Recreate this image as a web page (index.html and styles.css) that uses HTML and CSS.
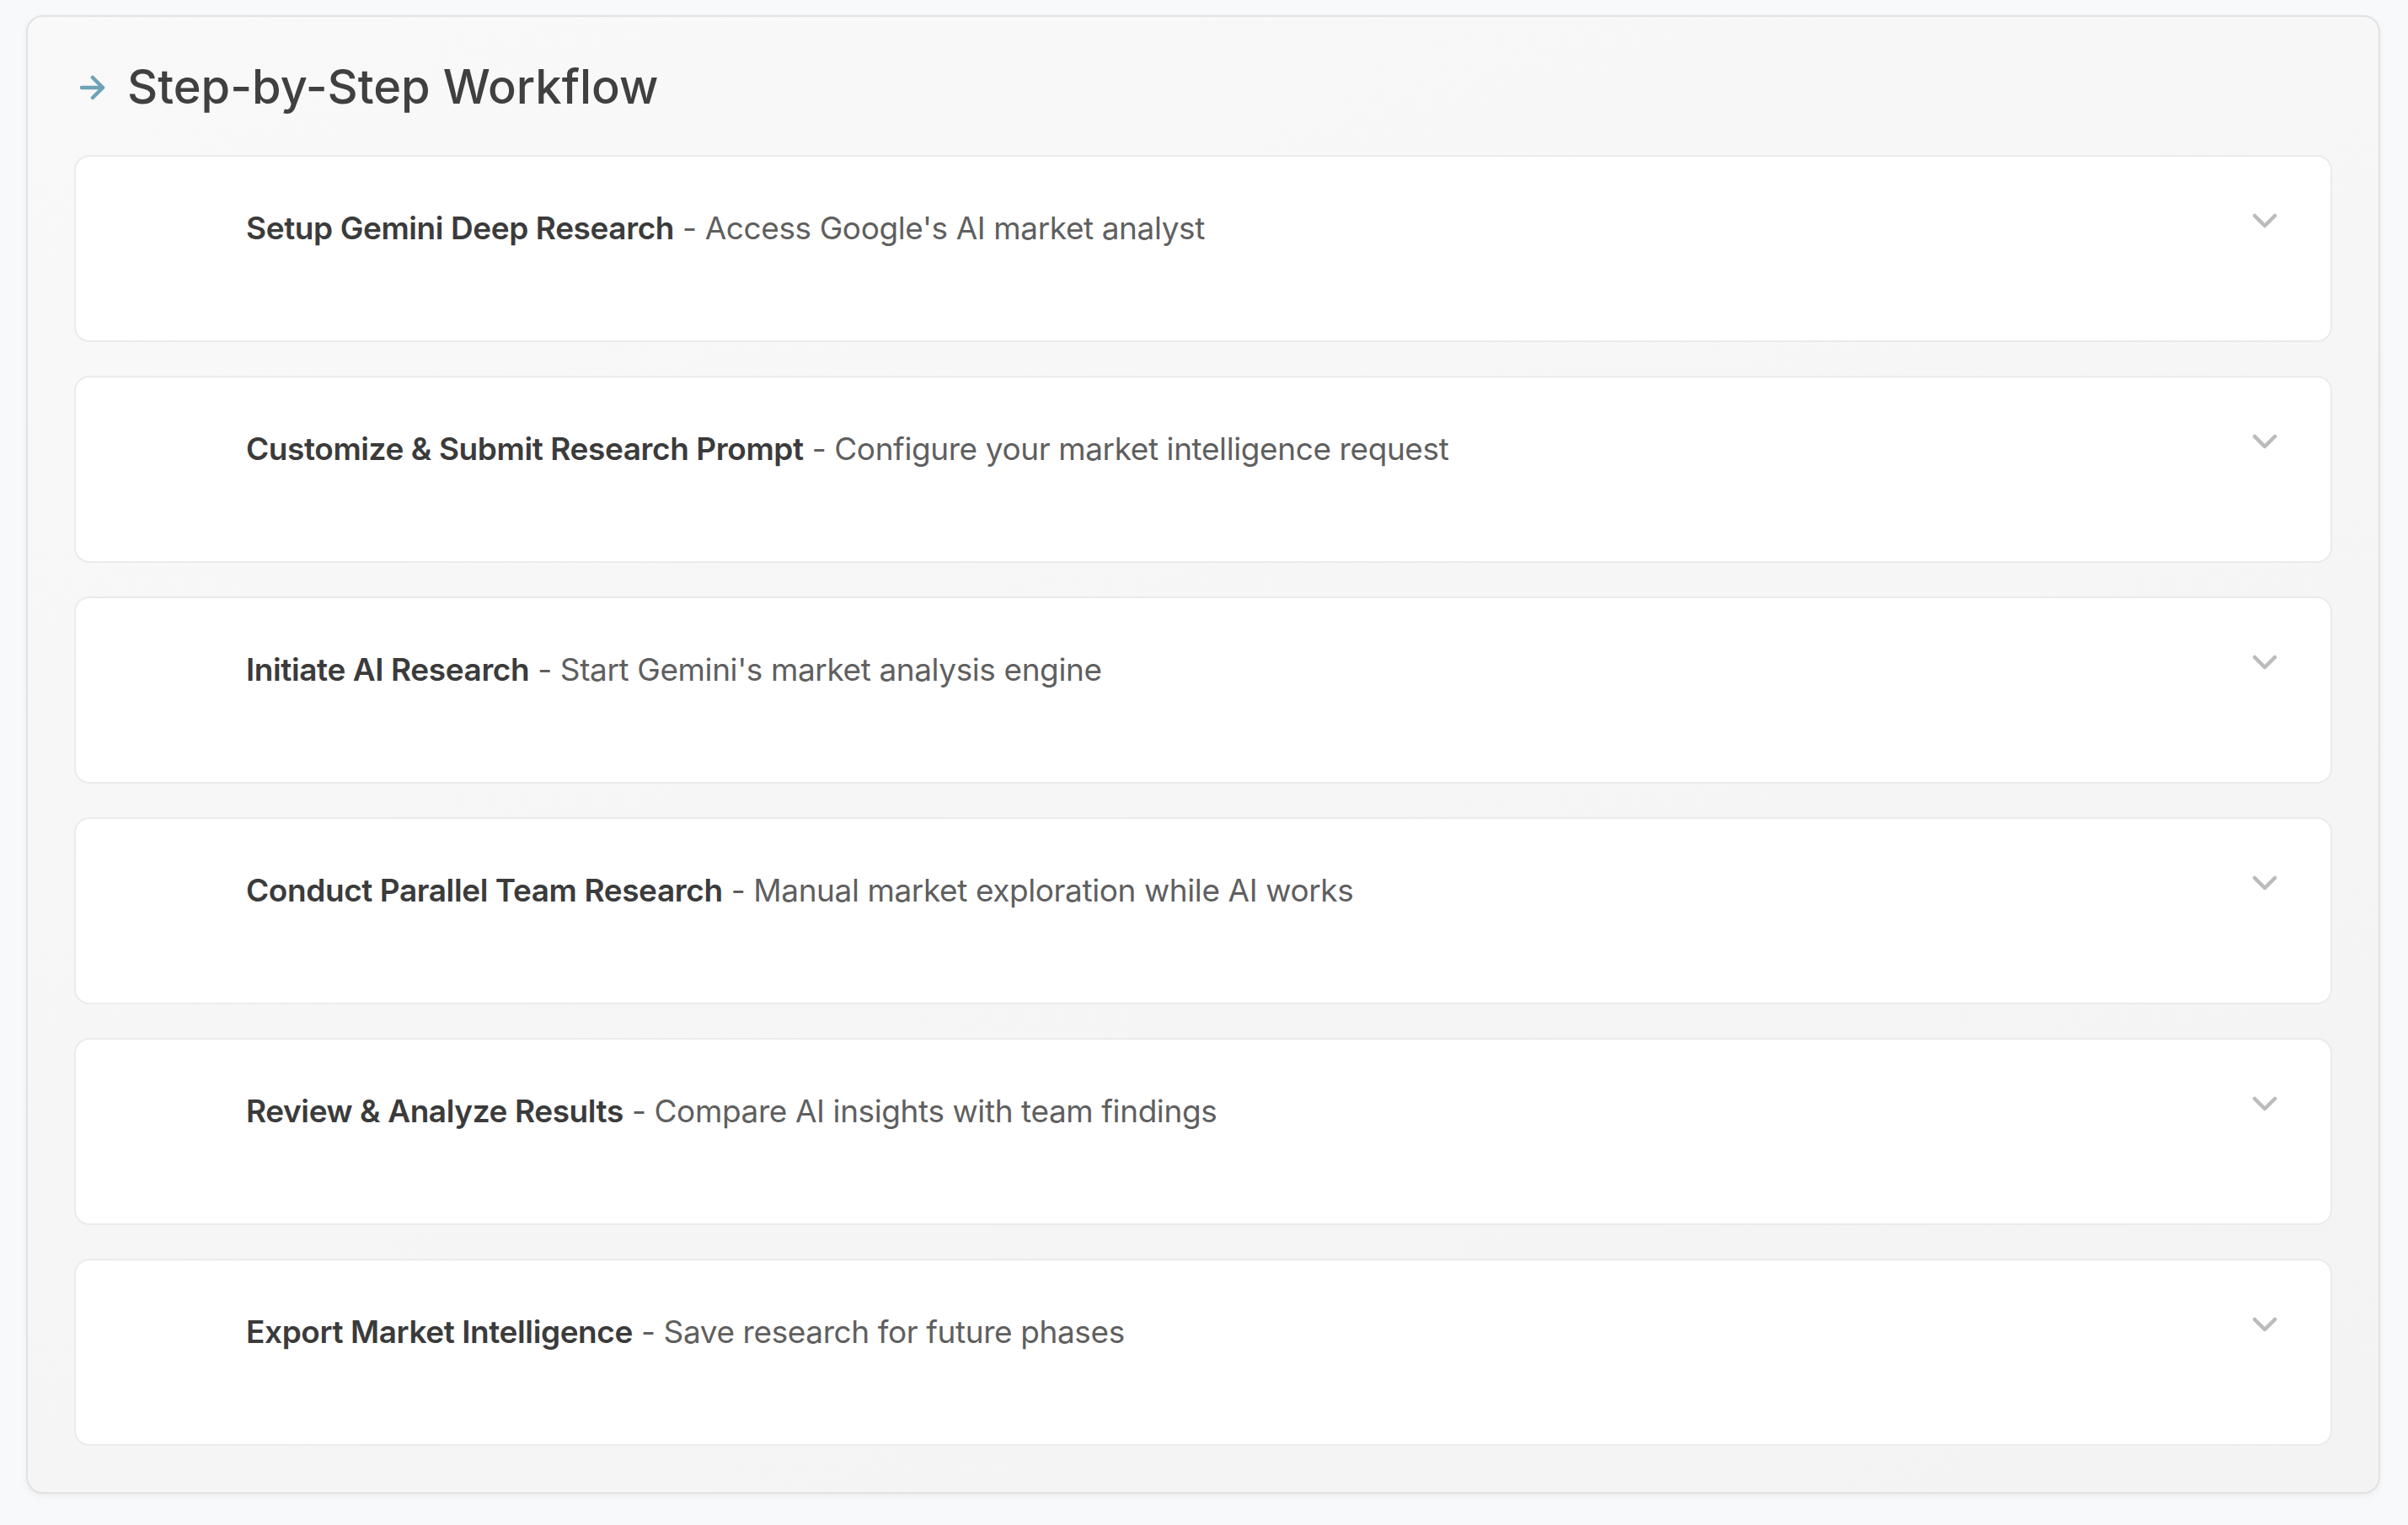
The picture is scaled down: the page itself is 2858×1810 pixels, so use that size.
FILE: index.html
```html
<!DOCTYPE html>
<html lang="en">
<head>
<meta charset="utf-8">
<title>Step-by-Step Workflow</title>
<link rel="stylesheet" href="styles.css">
</head>
<body>
<div class="page">
  <section class="panel">
    <h2 class="panel-title">
      <svg class="title-arrow" width="32" height="30" viewBox="0 0 32 30"><path d="M3 15 H28 M16 3 L28 15 L16 27" fill="none" stroke="#6ea2b7" stroke-width="4.5" stroke-linecap="round" stroke-linejoin="round"/></svg>
      <span>Step-by-Step Workflow</span>
    </h2>
    <div class="steps">
      <div class="step"><div class="step-head"><p class="step-text"><b>Setup Gemini Deep Research</b> - Access Google's AI market analyst</p><svg class="chev" width="30" height="18" viewBox="0 0 30 18"><path d="M3 3 L15 15 L27 3" fill="none" stroke="#bbbbbb" stroke-width="4.5" stroke-linecap="round" stroke-linejoin="round"/></svg></div></div>
      <div class="step"><div class="step-head"><p class="step-text"><b>Customize &amp; Submit Research Prompt</b> - Configure your market intelligence request</p><svg class="chev" width="30" height="18" viewBox="0 0 30 18"><path d="M3 3 L15 15 L27 3" fill="none" stroke="#bbbbbb" stroke-width="4.5" stroke-linecap="round" stroke-linejoin="round"/></svg></div></div>
      <div class="step"><div class="step-head"><p class="step-text"><b>Initiate AI Research</b> - Start Gemini's market analysis engine</p><svg class="chev" width="30" height="18" viewBox="0 0 30 18"><path d="M3 3 L15 15 L27 3" fill="none" stroke="#bbbbbb" stroke-width="4.5" stroke-linecap="round" stroke-linejoin="round"/></svg></div></div>
      <div class="step"><div class="step-head"><p class="step-text"><b>Conduct Parallel Team Research</b> - Manual market exploration while AI works</p><svg class="chev" width="30" height="18" viewBox="0 0 30 18"><path d="M3 3 L15 15 L27 3" fill="none" stroke="#bbbbbb" stroke-width="4.5" stroke-linecap="round" stroke-linejoin="round"/></svg></div></div>
      <div class="step"><div class="step-head"><p class="step-text"><b>Review &amp; Analyze Results</b> - Compare AI insights with team findings</p><svg class="chev" width="30" height="18" viewBox="0 0 30 18"><path d="M3 3 L15 15 L27 3" fill="none" stroke="#bbbbbb" stroke-width="4.5" stroke-linecap="round" stroke-linejoin="round"/></svg></div></div>
      <div class="step"><div class="step-head"><p class="step-text"><b>Export Market Intelligence</b> - Save research for future phases</p><svg class="chev" width="30" height="18" viewBox="0 0 30 18"><path d="M3 3 L15 15 L27 3" fill="none" stroke="#bbbbbb" stroke-width="4.5" stroke-linecap="round" stroke-linejoin="round"/></svg></div></div>
    </div>
  </section>
</div>
</body>
</html>
```
FILE: styles.css
```css
html, body {
  margin: 0;
  padding: 0;
  background: #f8f9fb;
}
body {
  font-family: "Inter", "Noto Sans", sans-serif;
  color: #3d3d3d;
}
.page {
  padding: 18px 33px 38px 31px;
}
.panel {
  background: linear-gradient(160deg, #f9f9f9 0%, #f3f3f3 100%);
  border: 2px solid #e2e2e2;
  border-radius: 20px;
  box-shadow: 0 3px 8px rgba(0, 0, 0, 0.05);
  padding: 55px 55px 55px 55px;
}
.panel-title {
  display: flex;
  align-items: center;
  gap: 25px;
  margin: 0 0 53px 0;
  padding: 0 0 0 6px;
  font-size: 56px;
  font-weight: 500;
  letter-spacing: 0;
  color: #404040;
  line-height: 56px;
}
.title-arrow {
  flex: none;
  margin-top: 2px;
}
.steps {
  display: flex;
  flex-direction: column;
  gap: 40px;
}
.step {
  background: #ffffff;
  border: 2px solid #ebebeb;
  border-radius: 18px;
  height: 222px;
  box-sizing: border-box;
}
.step-head {
  display: flex;
  align-items: flex-start;
  justify-content: space-between;
  padding: 64px 63px 0 202px;
}
.step-text {
  margin: 0;
  font-size: 37px;
  line-height: 42px;
  color: #5f5f5f;
  letter-spacing: -0.011em;
}
.step-text b {
  font-weight: 600;
  color: #3b3b3b;
}
.chev {
  flex: none;
  margin-top: 3px;
}
```
